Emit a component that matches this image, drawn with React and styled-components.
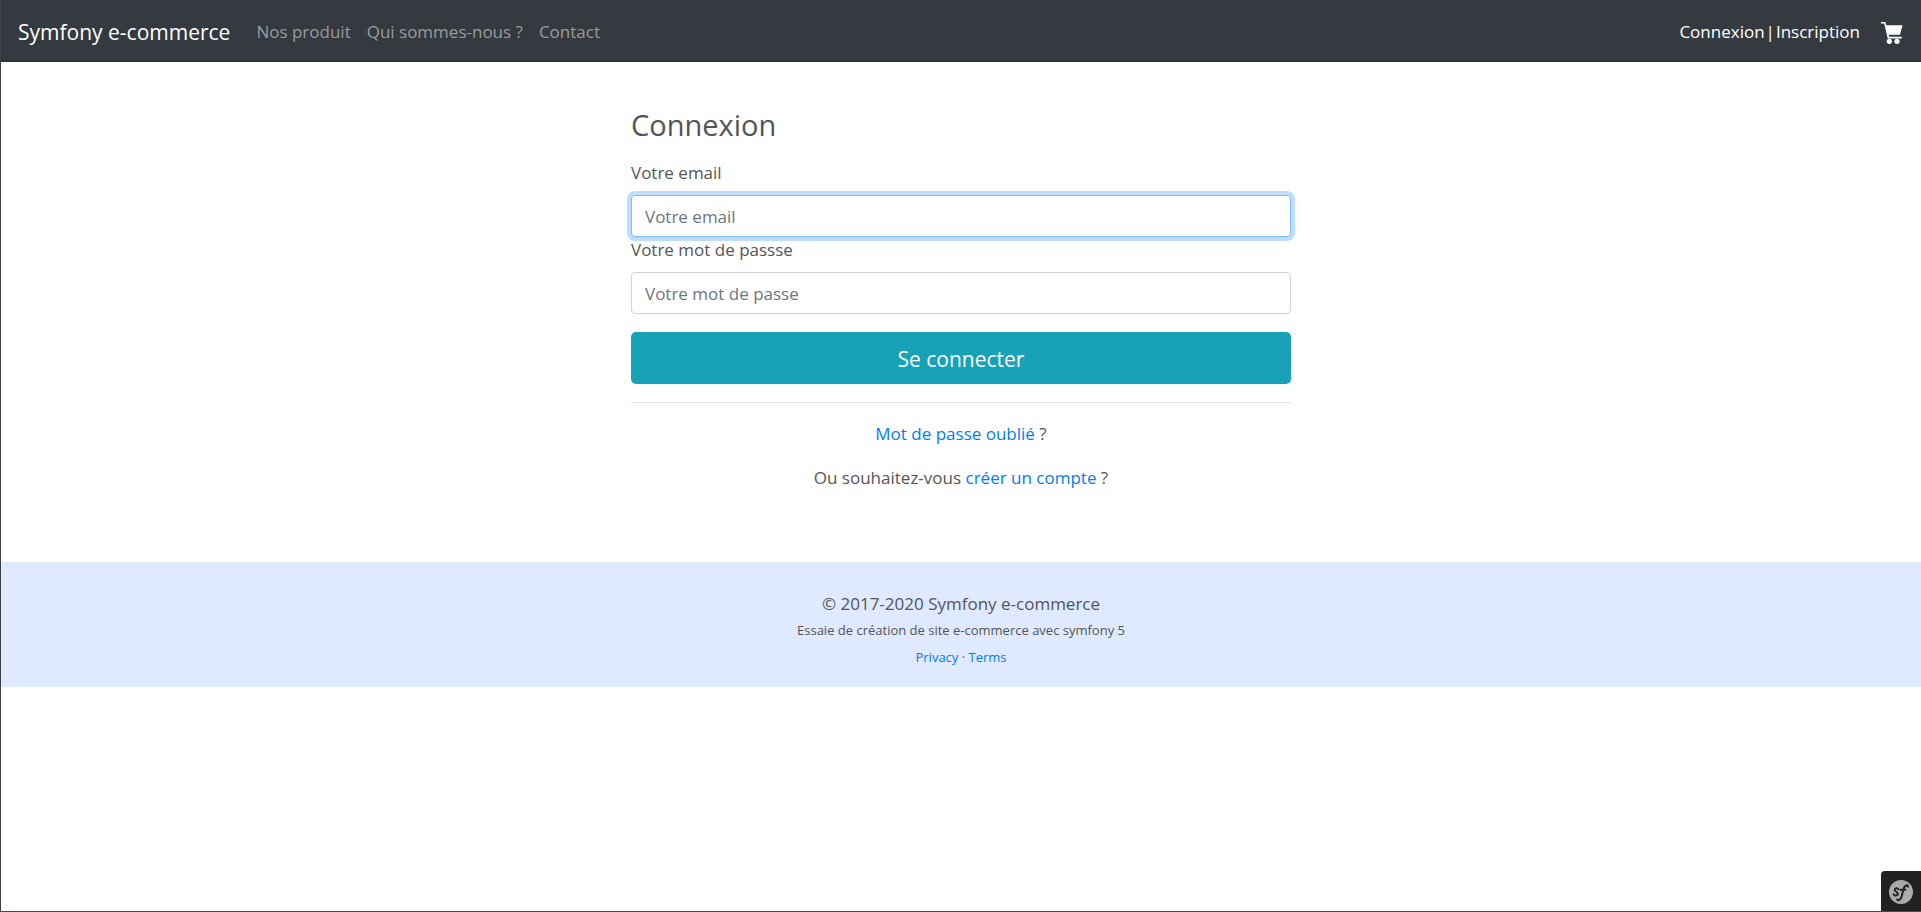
import React from "react";
import styled, { createGlobalStyle } from "styled-components";

const GlobalStyle = createGlobalStyle`
  *, *::before, *::after { box-sizing: border-box; }
  body {
    margin: 0;
    background: #fff;
    color: #555;
    font-family: "Open Sans", "Noto Sans", "Liberation Sans", sans-serif;
    font-size: 17px;
    line-height: 26px;
  }
  input, button { font-family: inherit; }
`;

const Page = styled.div`
  min-height: 100vh;
  border-left: 1px solid #3c3f43;
  border-bottom: 1px solid #4a4a4a;
`;

const Navbar = styled.nav`
  display: flex;
  align-items: center;
  height: 62px;
  padding: 2px 18px 0 17px;
  background: #343a40;
  border-bottom: 1px solid #2c2e33;
`;

const Brand = styled.a`
  margin-right: 18px;
  color: #fff;
  font-size: 21px;
  text-decoration: none;
`;

const NavList = styled.ul`
  display: flex;
  flex: 1;
  margin: 0;
  padding: 0;
  list-style: none;
`;

const NavLink = styled.a`
  display: block;
  padding: 8px;
  color: #9a9c9f;
  text-decoration: none;
`;

const Account = styled.div`
  display: flex;
  align-items: center;
  gap: 1px;
  color: #fff;
`;

const AccountLink = styled.a`
  color: #fff;
  text-decoration: none;
`;

const CartLink = styled.a`
  display: flex;
  margin-left: 20px;
  padding-top: 2px;
`;

const Main = styled.main`
  max-width: 660px;
  margin: 0 auto;
  padding-top: 44px;
`;

const Title = styled.h1`
  margin: 0 0 17px;
  font-size: 29px;
  font-weight: 400;
  line-height: 37px;
`;

const Label = styled.label`
  display: block;
  height: 26px;
  margin-bottom: 9px;
`;

const Field = styled.input`
  display: block;
  width: 100%;
  height: 42px;
  padding: 7px 13px;
  border: 1px solid #ced4da;
  border-radius: 4px;
  background: #fff;
  color: #495057;
  font-size: 17px;
  outline: 0;
  &::placeholder { color: #6c757d; opacity: 1; }
  &:focus {
    border-color: #80bdff;
    box-shadow: 0 0 0 4px #bfdeff;
  }
`;

const Submit = styled.button`
  display: block;
  width: 100%;
  height: 52px;
  margin: 18px 0;
  padding: 2px 0 0;
  border: 0;
  border-radius: 5px;
  background: #17a2b8;
  color: #fff;
  font-size: 21px;
  line-height: 32px;
`;

const Divider = styled.hr`
  height: 1px;
  margin: 0 0 18px;
  border: 0;
  background: #e5e5e5;
`;

const Help = styled.p`
  margin: 0 0 18px;
  text-align: center;
`;

const Link = styled.a`
  color: #007bff;
  text-decoration: none;
`;

const Footer = styled.footer`
  margin-top: 71px;
  padding: 28px 0 16px;
  background: #dfe9ff;
  text-align: center;
`;

const FooterLine = styled.p`
  margin: 0;
  line-height: 27px;
  font-size: ${(p) => (p.$small ? "13px" : "17px")};
`;

const DebugToggle = styled.button`
  position: fixed;
  right: 0;
  bottom: 1px;
  display: flex;
  width: 40px;
  height: 40px;
  padding: 9px 0 0 8px;
  border: 0;
  border-radius: 4px 0 0 0;
  background: #222;
`;

function CartIcon() {
  return (
    <svg width="22" height="22" viewBox="0 0 22 22" fill="#fff" aria-hidden="true">
      <path d="M0 0h4.4l.9 3.2H21.6l-2.7 9.6H7.6l.5 2h12.6v1.6H6.7L3.2 1.6H0z" />
      <circle cx="8.3" cy="19.3" r="2.6" />
      <circle cx="16" cy="19.3" r="2.6" />
    </svg>
  );
}

function SymfonyIcon() {
  return (
    <svg width="24" height="24" viewBox="0 0 24 24" aria-hidden="true">
      <circle cx="12" cy="12" r="12" fill="#aaa" />
      <path
        fill="none"
        stroke="#222"
        strokeWidth="2"
        strokeLinecap="round"
        d="M9.3 9.2C8.7 7.600 5.600 7.900 5.700 10c.1 1.700 3.300 1.900 3.200 3.900-.1 2-3.700 2.300-4.300.4M19 6.700c-.2-2.400-3.600-1.700-4.500 2.300l-1.800 7.300c-.8 3.400-3.300 4.600-4.500 3.200M11.500 9.700h5"
      />
    </svg>
  );
}

export default function App() {
  return (
    <Page>
      <GlobalStyle />
      <Navbar>
        <Brand href="#">Symfony e-commerce</Brand>
        <NavList>
          <li><NavLink href="#produits">Nos produit</NavLink></li>
          <li><NavLink href="#about">Qui sommes-nous ?</NavLink></li>
          <li><NavLink href="#contact">Contact</NavLink></li>
        </NavList>
        <Account>
          <AccountLink href="#connexion">Connexion</AccountLink>
          <span>|</span>
          <AccountLink href="#inscription">Inscription</AccountLink>
          <CartLink href="#panier" aria-label="Panier"><CartIcon /></CartLink>
        </Account>
      </Navbar>
      <Main>
        <form onSubmit={(e) => e.preventDefault()}>
          <Title>Connexion</Title>
          <Label htmlFor="email">Votre email</Label>
          <Field id="email" type="email" placeholder="Votre email" autoFocus />
          <Label htmlFor="password">Votre mot de passse</Label>
          <Field id="password" type="password" placeholder="Votre mot de passe" />
          <Submit type="submit">Se connecter</Submit>
        </form>
        <Divider />
        <Help><Link href="#oubli">Mot de passe oublié</Link> ?</Help>
        <Help>Ou souhaitez-vous <Link href="#inscription">créer un compte</Link> ?</Help>
      </Main>
      <Footer>
        <FooterLine>© 2017-2020 Symfony e-commerce</FooterLine>
        <FooterLine $small>Essaie de création de site e-commerce avec symfony 5</FooterLine>
        <FooterLine $small><Link href="#privacy">Privacy</Link> · <Link href="#terms">Terms</Link></FooterLine>
      </Footer>
      <DebugToggle type="button" aria-label="Symfony"><SymfonyIcon /></DebugToggle>
    </Page>
  );
}
